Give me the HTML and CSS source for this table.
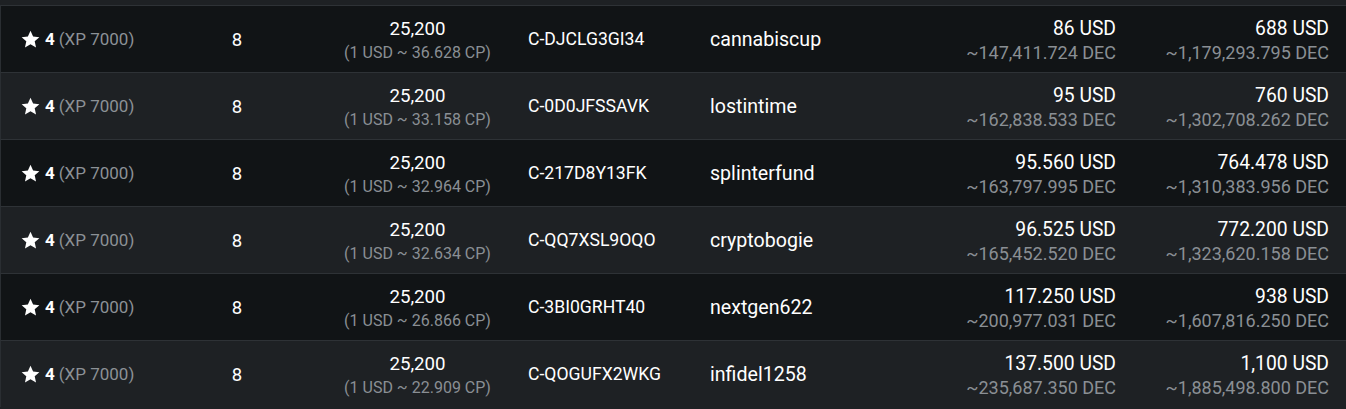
FILE: index.html
```html
<!DOCTYPE html>
<html>
<head>
<meta charset="utf-8">
<link rel="stylesheet" href="styles.css">
</head>
<body>
<div class="table">
  <div class="row dark">
    <div class="cell level"><svg class="star" viewBox="0 0 24 24"><path d="M12 1l3.3 7.2 7.9.8-5.9 5.3 1.7 7.8L12 18.1l-7 4 1.7-7.8L.8 9l7.9-.8z"/></svg><b>4</b> <span class="muted">(XP 7000)</span></div>
    <div class="cell center count">8</div>
    <div class="cell center stack"><span class="main">25,200</span><span class="sub">(1 USD ~ 36.628 CP)</span></div>
    <div class="cell code">C-DJCLG3GI34</div>
    <div class="cell name">cannabiscup</div>
    <div class="cell right stack"><span class="main">86 USD</span><span class="sub2">~147,411.724 DEC</span></div>
    <div class="cell right stack"><span class="main">688 USD</span><span class="sub2">~1,179,293.795 DEC</span></div>
  </div>
  <div class="row light">
    <div class="cell level"><svg class="star" viewBox="0 0 24 24"><path d="M12 1l3.3 7.2 7.9.8-5.9 5.3 1.7 7.8L12 18.1l-7 4 1.7-7.8L.8 9l7.9-.8z"/></svg><b>4</b> <span class="muted">(XP 7000)</span></div>
    <div class="cell center count">8</div>
    <div class="cell center stack"><span class="main">25,200</span><span class="sub">(1 USD ~ 33.158 CP)</span></div>
    <div class="cell code">C-0D0JFSSAVK</div>
    <div class="cell name">lostintime</div>
    <div class="cell right stack"><span class="main">95 USD</span><span class="sub2">~162,838.533 DEC</span></div>
    <div class="cell right stack"><span class="main">760 USD</span><span class="sub2">~1,302,708.262 DEC</span></div>
  </div>
  <div class="row dark">
    <div class="cell level"><svg class="star" viewBox="0 0 24 24"><path d="M12 1l3.3 7.2 7.9.8-5.9 5.3 1.7 7.8L12 18.1l-7 4 1.7-7.8L.8 9l7.9-.8z"/></svg><b>4</b> <span class="muted">(XP 7000)</span></div>
    <div class="cell center count">8</div>
    <div class="cell center stack"><span class="main">25,200</span><span class="sub">(1 USD ~ 32.964 CP)</span></div>
    <div class="cell code">C-217D8Y13FK</div>
    <div class="cell name">splinterfund</div>
    <div class="cell right stack"><span class="main">95.560 USD</span><span class="sub2">~163,797.995 DEC</span></div>
    <div class="cell right stack"><span class="main">764.478 USD</span><span class="sub2">~1,310,383.956 DEC</span></div>
  </div>
  <div class="row light">
    <div class="cell level"><svg class="star" viewBox="0 0 24 24"><path d="M12 1l3.3 7.2 7.9.8-5.9 5.3 1.7 7.8L12 18.1l-7 4 1.7-7.8L.8 9l7.9-.8z"/></svg><b>4</b> <span class="muted">(XP 7000)</span></div>
    <div class="cell center count">8</div>
    <div class="cell center stack"><span class="main">25,200</span><span class="sub">(1 USD ~ 32.634 CP)</span></div>
    <div class="cell code">C-QQ7XSL9OQO</div>
    <div class="cell name">cryptobogie</div>
    <div class="cell right stack"><span class="main">96.525 USD</span><span class="sub2">~165,452.520 DEC</span></div>
    <div class="cell right stack"><span class="main">772.200 USD</span><span class="sub2">~1,323,620.158 DEC</span></div>
  </div>
  <div class="row dark">
    <div class="cell level"><svg class="star" viewBox="0 0 24 24"><path d="M12 1l3.3 7.2 7.9.8-5.9 5.3 1.7 7.8L12 18.1l-7 4 1.7-7.8L.8 9l7.9-.8z"/></svg><b>4</b> <span class="muted">(XP 7000)</span></div>
    <div class="cell center count">8</div>
    <div class="cell center stack"><span class="main">25,200</span><span class="sub">(1 USD ~ 26.866 CP)</span></div>
    <div class="cell code">C-3BI0GRHT40</div>
    <div class="cell name">nextgen622</div>
    <div class="cell right stack"><span class="main">117.250 USD</span><span class="sub2">~200,977.031 DEC</span></div>
    <div class="cell right stack"><span class="main">938 USD</span><span class="sub2">~1,607,816.250 DEC</span></div>
  </div>
  <div class="row light">
    <div class="cell level"><svg class="star" viewBox="0 0 24 24"><path d="M12 1l3.3 7.2 7.9.8-5.9 5.3 1.7 7.8L12 18.1l-7 4 1.7-7.8L.8 9l7.9-.8z"/></svg><b>4</b> <span class="muted">(XP 7000)</span></div>
    <div class="cell center count">8</div>
    <div class="cell center stack"><span class="main">25,200</span><span class="sub">(1 USD ~ 22.909 CP)</span></div>
    <div class="cell code">C-QOGUFX2WKG</div>
    <div class="cell name">infidel1258</div>
    <div class="cell right stack"><span class="main">137.500 USD</span><span class="sub2">~235,687.350 DEC</span></div>
    <div class="cell right stack"><span class="main">1,100 USD</span><span class="sub2">~1,885,498.800 DEC</span></div>
  </div>
</div>
</body>
</html>
```
FILE: styles.css
```css
html, body {
  margin: 0;
  padding: 0;
  background: #1e2124;
}
body {
  font-family: Roboto, "Liberation Sans", sans-serif;
  color: #ffffff;
}
.table {
  padding-top: 5px;
  background: #1e2124;
}
.row {
  display: grid;
  grid-template-columns: 166px 140px 221px 182px 200px 206px 213px 18px;
  height: 66px;
  border-top: 1px solid #2e3236;
  border-left: 1px solid #2a2e32;
  align-items: center;
  box-sizing: content-box;
}
.row.dark { background: #111416; }
.row.light { background: #1e2124; }
.cell {
  display: flex;
  align-items: center;
  font-size: 17.6px;
  white-space: nowrap;
}
.level {
  padding-left: 20px;
  font-size: 17px;
}
.level b {
  font-weight: 700;
  color: #fff;
  margin-left: 5px;
}
.level .muted {
  color: #8c9196;
  margin-left: 4px;
}
.star {
  width: 19px;
  height: 19px;
  fill: #fff;
}
.center { justify-content: center; }
.right { align-items: flex-end; }
.stack {
  flex-direction: column;
  justify-content: center;
  line-height: 24px;
  padding-top: 3px;
}
.center.stack { align-items: center; }
.count { color: #fff; font-size: 18.5px; padding-top: 1px; }
.main { color: #fff; font-size: 19.3px; }
.center .main { font-size: 18.7px; }
.code { color: #fff; font-size: 17.6px; }
.sub { color: #8a8f94; font-size: 16px; line-height: 24px; }
.sub2 { color: #8a8f94; font-size: 18px; line-height: 24px; }
.name { font-size: 19.6px; color: #fff; }
```
